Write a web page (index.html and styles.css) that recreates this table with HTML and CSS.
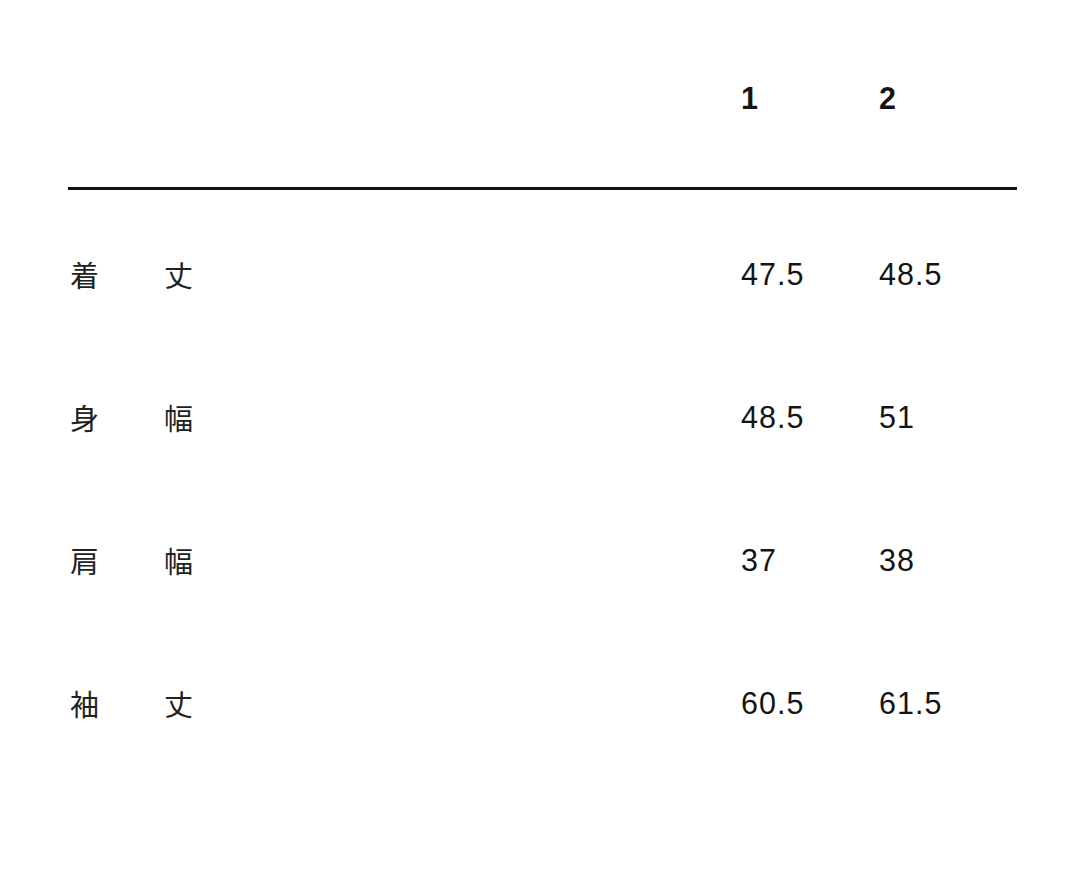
FILE: index.html
```html
<!DOCTYPE html>
<html lang="ja">
<head>
<meta charset="utf-8">
<link rel="stylesheet" href="styles.css">
</head>
<body>
<div class="page">
  <div class="sizes">
    <div class="row head">
      <div class="cell"></div>
      <div class="cell"></div>
      <div class="cell num">1</div>
      <div class="cell num">2</div>
    </div>
    <div class="body">
      <div class="row">
        <div class="cell jp">着</div>
        <div class="cell jp">丈</div>
        <div class="cell">47.5</div>
        <div class="cell">48.5</div>
      </div>
      <div class="row">
        <div class="cell jp">身</div>
        <div class="cell jp">幅</div>
        <div class="cell">48.5</div>
        <div class="cell">51</div>
      </div>
      <div class="row">
        <div class="cell jp">肩</div>
        <div class="cell jp">幅</div>
        <div class="cell">37</div>
        <div class="cell">38</div>
      </div>
      <div class="row">
        <div class="cell jp">袖</div>
        <div class="cell jp">丈</div>
        <div class="cell">60.5</div>
        <div class="cell">61.5</div>
      </div>
    </div>
  </div>
</div>
</body>
</html>
```
FILE: styles.css
```css
html, body {
  margin: 0;
  padding: 0;
  background: #ffffff;
}
body {
  font-family: "Liberation Sans", Arial, "Noto Sans CJK JP", sans-serif;
  color: #141414;
}
.page {
  width: 1080px;
  height: 884px;
  padding: 78px 63px 0 68px;
  box-sizing: border-box;
}
.sizes {
  width: 949px;
}
.row {
  display: grid;
  grid-template-columns: 94px 579px 138px 138px;
  font-size: 30.5px;
  letter-spacing: 1px;
  line-height: 40px;
}
.head {
  padding-bottom: 69px;
  border-bottom: 3px solid #111;
}
.num {
  font-weight: bold;
}
.body {
  padding-top: 64px;
  display: flex;
  flex-direction: column;
  gap: 103px;
}
.cell {
  white-space: nowrap;
}
.jp {
  font-family: "Noto Sans CJK JP", sans-serif;
  font-size: 29px;
  letter-spacing: 0;
  padding-left: 2px;
  color: #222;
}
```
